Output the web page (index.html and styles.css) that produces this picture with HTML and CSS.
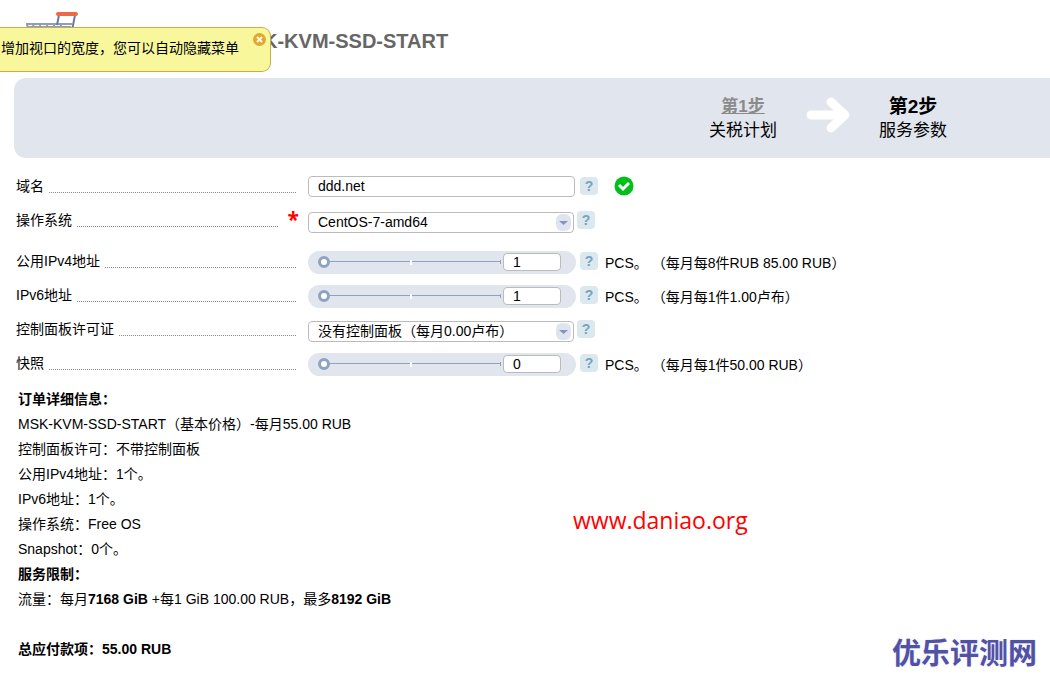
FILE: index.html
```html
<!DOCTYPE html>
<html lang="zh-CN">
<head>
<meta charset="utf-8">
<title>MSK-KVM-SSD-START</title>
<link rel="stylesheet" href="styles.css">
</head>
<body>
<header class="header">
  <svg class="cart" width="56" height="52" viewBox="0 0 56 52" aria-hidden="true">
    <path d="M2 12H48M3 12l4 22h36M9 12l3 22M16 12l2 22M23 12l1 22M30 12v22M37 12l-1 22M3 15h44M5 22h40" fill="none" stroke="#8d9dbb" stroke-width="2"/>
    <path d="M51 3L45 34M35 3l-2 10" fill="none" stroke="#667aa6" stroke-width="2"/>
    <path d="M34 2H52" stroke="#e9694a" stroke-width="4" stroke-linecap="round"/>
  </svg>
  <h1 class="title">MSK-KVM-SSD-START</h1>
  <div class="notice" role="status">
    <span>增加视口的宽度，您可以自动隐藏菜单</span>
    <button class="close" type="button" aria-label="关闭">
      <svg width="13" height="13" viewBox="0 0 13 13"><circle cx="6.5" cy="6.5" r="6.5" fill="#e0a832"/><path d="M4 4l5 5M9 4l-5 5" stroke="#fff8dc" stroke-width="2"/></svg>
    </button>
  </div>
</header>

<nav class="steps">
  <div class="step">
    <a class="step-link" href="#plan">第1步</a>
    <span>关税计划</span>
  </div>
  <svg width="44" height="36" viewBox="0 0 44 36" aria-hidden="true"><path d="M5 18H37M25 5L39 18L25 31" fill="none" stroke="#fff" stroke-width="9" stroke-linecap="round" stroke-linejoin="round"/></svg>
  <div class="step">
    <strong class="step-current">第2步</strong>
    <span>服务参数</span>
  </div>
</nav>

<main>
  <form class="form">
    <div class="row">
      <label class="label" for="domain">域名</label>
      <div class="field">
        <input class="text" id="domain" type="text" value="ddd.net">
        <button class="help" type="button">?</button>
        <svg class="valid" width="20" height="20" viewBox="0 0 20 20" role="img" aria-label="OK"><circle cx="10" cy="10" r="9.5" fill="#00bf19"/><path d="M5 9l4 4 6-6" fill="none" stroke="#fff" stroke-width="3"/></svg>
      </div>
    </div>
    <div class="row row-os">
      <label class="label required" for="os">操作系统</label>
      <div class="field">
        <div class="select-box">
          <select class="select" id="os"><option>CentOS-7-amd64</option></select>
          <svg class="arrow" width="15" height="17" viewBox="0 0 15 17" aria-hidden="true"><rect width="15" height="17" rx="6" fill="#dfe4ee"/><path d="M3 7h9L7.500 11z" fill="#8496bd"/></svg>
        </div>
        <button class="help" type="button">?</button>
      </div>
    </div>
    <div class="row">
      <label class="label" for="ipv4">公用IPv4地址</label>
      <div class="field">
        <div class="slider">
          <input class="range" type="range" min="1" max="8" value="1" aria-label="公用IPv4地址">
          <input class="count" id="ipv4" type="text" value="1">
        </div>
        <button class="help" type="button">?</button>
        <span class="price">PCS。 （每月每8件RUB 85.00 RUB）</span>
      </div>
    </div>
    <div class="row">
      <label class="label" for="ipv6">IPv6地址</label>
      <div class="field">
        <div class="slider">
          <input class="range" type="range" min="1" max="8" value="1" aria-label="IPv6地址">
          <input class="count" id="ipv6" type="text" value="1">
        </div>
        <button class="help" type="button">?</button>
        <span class="price">PCS。 （每月每1件1.00卢布）</span>
      </div>
    </div>
    <div class="row">
      <label class="label" for="panel">控制面板许可证</label>
      <div class="field">
        <div class="select-box">
          <select class="select" id="panel"><option>没有控制面板（每月0.00卢布）</option></select>
          <svg class="arrow" width="15" height="17" viewBox="0 0 15 17" aria-hidden="true"><rect width="15" height="17" rx="6" fill="#dfe4ee"/><path d="M3 7h9L7.500 11z" fill="#8496bd"/></svg>
        </div>
        <button class="help" type="button">?</button>
      </div>
    </div>
    <div class="row">
      <label class="label" for="snapshot">快照</label>
      <div class="field">
        <div class="slider">
          <input class="range" type="range" min="0" max="8" value="0" aria-label="快照">
          <input class="count" id="snapshot" type="text" value="0">
        </div>
        <button class="help" type="button">?</button>
        <span class="price">PCS。 （每月每1件50.00 RUB）</span>
      </div>
    </div>
  </form>

  <section class="details">
    <p><b>订单详细信息：</b></p>
    <p>MSK-KVM-SSD-START（基本价格）-每月55.00 RUB</p>
    <p>控制面板许可：不带控制面板</p>
    <p>公用IPv4地址：1个。</p>
    <p>IPv6地址：1个。</p>
    <p>操作系统：Free OS</p>
    <p>Snapshot：0个。</p>
    <p><b>服务限制：</b></p>
    <p>流量：每月<b>7168 GiB</b> +每1 GiB 100.00 RUB，最多<b>8192 GiB</b></p>
    <p class="total"><b>总应付款项：55.00 RUB</b></p>
  </section>
</main>
<div class="mark mark-url">www.daniao.org</div>
<div class="mark mark-name">优乐评测网</div>
</body>
</html>
```

FILE: styles.css
```css
* {
  box-sizing: border-box;
}

body {
  margin: 0;
  position: relative;
  min-height: 100vh;
  overflow-x: hidden;
  background: #fff;
  color: #000;
  font: 14px/20px "Liberation Sans", Arial, "Noto Sans CJK SC", sans-serif;
}

input,
select,
button {
  margin: 0;
  color: inherit;
  font: inherit;
}

.header {
  position: relative;
  display: flex;
  height: 78px;
  padding: 12px 24px 0;
}

.cart {
  flex: none;
}

.title {
  margin: 17px 0 0 153px;
  color: #666;
  font-size: 20px;
  line-height: 24px;
}

.notice {
  position: absolute;
  top: 27px;
  left: 0;
  display: flex;
  width: 271px;
  height: 45px;
  justify-content: space-between;
  padding: 10px 4px 0 1px;
  border: 1px solid #c5af4a;
  border-left: 0;
  border-radius: 0 9px 9px 0;
  background: #f8f79c;
  white-space: nowrap;
}

.close {
  align-self: flex-start;
  display: flex;
  margin-top: -5px;
  padding: 0;
  border: 0;
  background: none;
}

.steps {
  display: flex;
  height: 80px;
  align-items: center;
  justify-content: flex-end;
  gap: 29px;
  margin-left: 14px;
  padding: 0 103px 6px 0;
  border-radius: 12px 0 0 12px;
  background: #e1e5ed;
  font-size: 17px;
  line-height: 24px;
}

.step {
  display: flex;
  flex-direction: column;
  align-items: center;
  padding-top: 8px;
}

.step-link {
  color: #8b8b8b;
  font-weight: bold;
}

.step-current {
  font-size: 19px;
}

.form {
  padding: 11px 16px 0;
}

.row {
  display: grid;
  height: 34px;
  grid-template-columns: 280px 1fr;
  align-items: center;
  column-gap: 12px;
}

.row-os {
  margin-bottom: 7px;
}

.label {
  display: flex;
  align-items: center;
  gap: 5px;
}

.label::after {
  flex: 1;
  height: 12px;
  border-bottom: 1px dotted #888;
  content: "";
}

.required {
  position: relative;
  padding-right: 18px;
}

.required::before {
  position: absolute;
  top: -3px;
  right: -3px;
  color: #f00;
  content: "*";
  font: bold 21px/24px "Open Sans", sans-serif;
}

.field {
  display: flex;
  align-items: center;
}

.text,
.select,
.count {
  border: 1px solid #bbb;
  border-radius: 4px;
  background: #fff;
  outline: 0;
}

.text {
  width: 267px;
  height: 21px;
  padding: 0 9px;
}

.select-box {
  position: relative;
  width: 266px;
  height: 21px;
  margin: 4px -2px 0 0;
}

.select {
  width: 100%;
  height: 21px;
  padding: 0 24px 0 9px;
  appearance: none;
  line-height: 19px;
}

.arrow {
  position: absolute;
  top: 2px;
  right: 3px;
  pointer-events: none;
}

.help {
  width: 18px;
  height: 18px;
  margin-left: 5px;
  padding: 0;
  border: 0;
  border-radius: 4px;
  background: #dbe8ee;
  color: #76a3c1;
  font-weight: bold;
  line-height: 18px;
}

.valid {
  margin-left: 16px;
}

.slider {
  display: flex;
  width: 268px;
  height: 23px;
  align-items: center;
  margin: 3px -1px 0 0;
  padding: 0 0 2px 10px;
  border-radius: 12px;
  background: #e1e5ed;
}

.range {
  width: 183px;
  height: 12px;
  appearance: none;
  background:
    linear-gradient(#fff, #fff) 92px 4px / 2px 5px no-repeat,
    linear-gradient(#8fa3c0, #8fa3c0) 182px 4px / 1px 4px no-repeat,
    linear-gradient(#8fa3c0, #8fa3c0) 6px 5px / 176px 1px no-repeat;
}

.range::-webkit-slider-thumb {
  width: 12px;
  height: 12px;
  appearance: none;
  border: 3px solid #8fa3c0;
  border-radius: 50%;
  background: #fff;
}

.count {
  width: 58px;
  height: 18px;
  margin-left: 2px;
  padding: 0 9px;
}

.price {
  margin: 4px 0 0 7px;
  white-space: nowrap;
}

.details {
  padding: 7px 18px 0;
  line-height: 25px;
}

.details p {
  margin: 0;
}

.details .total {
  margin-top: 25px;
}

.mark {
  position: absolute;
  white-space: nowrap;
  pointer-events: none;
}

.mark-url {
  top: 503px;
  left: 573px;
  color: #f00;
  font: 23px/34px "Open Sans", sans-serif;
}

.mark-name {
  top: 631px;
  right: 13px;
  color: #5152a6;
  font: bold 29px/40px "Noto Sans CJK SC", sans-serif;
  text-shadow: 0 0 2px #d9d9f4;
}
```
